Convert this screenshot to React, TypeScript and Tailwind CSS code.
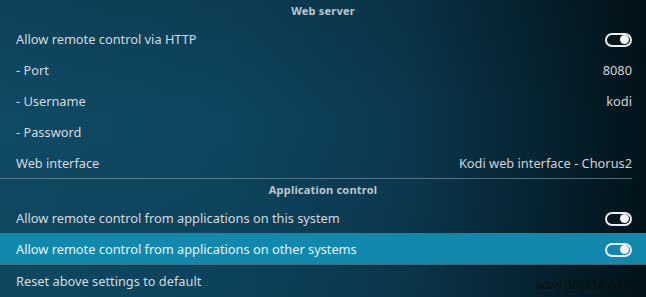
import React from 'react';

type Row = {
  label: string;
  value?: string;
  toggle?: boolean;
  focused?: boolean;
};

const webServer: Row[] = [
  { label: 'Allow remote control via HTTP', toggle: true },
  { label: '- Port', value: '8080' },
  { label: '- Username', value: 'kodi' },
  { label: '- Password' },
  { label: 'Web interface', value: 'Kodi web interface - Chorus2' },
];

const appControl: Row[] = [
  { label: 'Allow remote control from applications on this system', toggle: true },
  { label: 'Allow remote control from applications on other systems', toggle: true, focused: true },
];

function Toggle() {
  return (
    <div className="w-[27px] h-[14px] rounded-full border-2 border-[#e8ecee] flex items-center justify-end pr-[1px]">
      <div className="w-[9px] h-[9px] rounded-full bg-[#f4f6f7]" />
    </div>
  );
}

function SettingRow({ row }: { row: Row }) {
  return (
    <div
      className={`h-[31px] flex items-center justify-between pl-4 pr-[14px] pt-[2px] text-[12.8px] ${
        row.focused ? 'bg-[#1288ad] text-[#e6f3f7]' : 'text-[#d3dade]'
      }`}
    >
      <span>{row.label}</span>
      {row.toggle && <Toggle />}
      {row.value && <span className="text-[#cdd4d8]">{row.value}</span>}
    </div>
  );
}

function Header({ title, h }: { title: string; h: string }) {
  return (
    <div className={`${h} flex items-center justify-center text-[11px] font-bold text-[#bcc6cb] tracking-[0.2px]`}>
      {title}
    </div>
  );
}

export default function App() {
  return (
    <div
      className="w-[646px] h-[297px] overflow-hidden relative bg-[linear-gradient(90deg,#104a65_0%,#0e4560_35%,#0b3950_62%,#06222f_85%,#02121a_100%)]"
      style={{ fontFamily: '"Noto Sans", "Open Sans", sans-serif' }}
    >
      <div className="absolute inset-0 bg-[linear-gradient(180deg,rgba(0,0,0,0.12)_0%,rgba(0,0,0,0)_40%,rgba(0,0,0,0.05)_100%)] pointer-events-none" />
      <div className="relative flex flex-col">
        <Header title="Web server" h="h-[23px]" />
        {webServer.map((r) => (
          <SettingRow key={r.label} row={r} />
        ))}
        <div className="h-px bg-[#6f8d9a]/70 mr-[14px]" />
        <Header title="Application control" h="h-[23px]" />
        {appControl.map((r) => (
          <SettingRow key={r.label} row={r} />
        ))}
        <div className="h-px bg-[#5f7f8c]/70" />
        <SettingRow row={{ label: 'Reset above settings to default' }} />
      </div>
      <div
        className="absolute right-[15px] bottom-[3px] text-[12px] text-[#0b0f10]"
        style={{ fontFamily: '"Liberation Sans", Arial, sans-serif' }}
      >
        www.989214.com
      </div>
    </div>
  );
}
